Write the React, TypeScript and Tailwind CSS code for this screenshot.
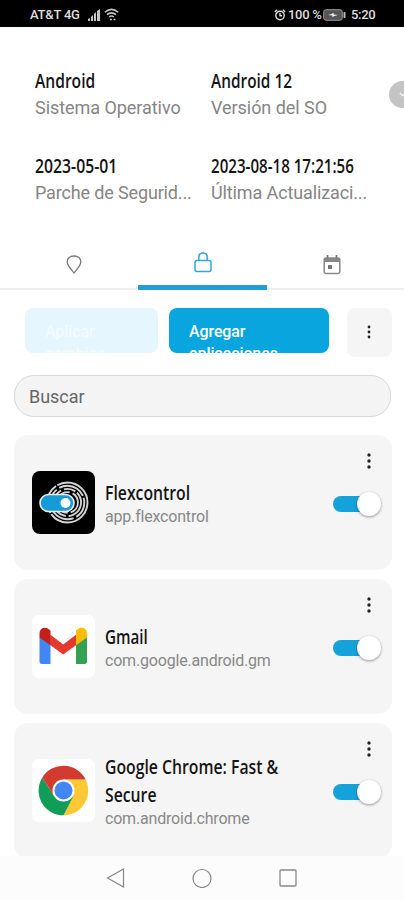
import type { ReactNode } from "react";
import clsx from "clsx";

type AppItem = {
  name: string;
  id: string;
  icon: ReactNode;
  scale: string;
};

function Condensed({ children, className }: { children: ReactNode; className?: string }) {
  return (
    <span
      className={clsx(
        "block w-max origin-left whitespace-pre-line font-['Open_Sans','Noto_Sans',sans-serif] text-[19px] font-semibold leading-7 text-[#151515]",
        className
      )}
    >
      {children}
    </span>
  );
}

function Dots({ small = false }: { small?: boolean }) {
  const gap = small ? 5 : 6;
  const r = small ? 1.4 : 1.7;
  return (
    <svg width="6" height="18" viewBox="0 0 6 18" fill="#222">
      <circle cx="3" cy={9 - gap} r={r} />
      <circle cx="3" cy="9" r={r} />
      <circle cx="3" cy={9 + gap} r={r} />
    </svg>
  );
}

function FlexcontrolIcon() {
  return (
    <svg width="63" height="63" viewBox="0 0 63 63">
      <rect width="63" height="63" rx="8" fill="#000" />
      <g fill="none" stroke="#d5d5d5" strokeWidth="1.9">
        <circle cx="35.500" cy="31.500" r="20" strokeDasharray="50 1.500 30 1.500" />
        <circle cx="35.500" cy="31.500" r="16.800" strokeDasharray="17 3 28 2" />
        <circle cx="35.500" cy="31.500" r="13.600" strokeDasharray="20 3 12 2" />
        <circle cx="35.500" cy="31.500" r="10.400" strokeDasharray="13 3 20 2" />
      </g>
      <rect x="8" y="23.500" width="34" height="17" rx="8.500" fill="#159bd7" stroke="#eee" strokeWidth="1.600" />
      <circle cx="33.500" cy="32" r="5" fill="#fff" />
    </svg>
  );
}

function GmailIcon() {
  return (
    <svg width="63" height="63" viewBox="0 0 63 63">
      <rect width="63" height="63" rx="7" fill="#fff" />
      <path d="M7.500 22 18.500 28V49H10a2.500 2.500 0 0 1-2.500-2.500Z" fill="#4285f4" />
      <path d="M44 28 55 22v24.500a2.500 2.500 0 0 1-2.500 2.500H44Z" fill="#34a052" />
      <path d="M18.200 19.500 31.200 29.500 44.300 19.500V30L31.200 39.500 18.200 30Z" fill="#e5392f" />
      <path d="M7.500 22.500v-4c0-5.500 5.500-7 9-4.500l2 1.800v14.400Z" fill="#c51f1c" />
      <path d="M55 22.500v-4c0-5.500-5.500-7-9-4.500l-2 1.800v14.400Z" fill="#fbbc04" />
    </svg>
  );
}

function ChromeIcon() {
  return (
    <svg width="63" height="63" viewBox="0 0 63 63">
      <rect width="63" height="63" rx="7" fill="#fff" />
      <path d="M31.500 20.500H53.600A24.800 24.800 0 0 1 31.500 56.300L41 37Z" fill="#fcc934" />
      <path d="M10.300 18.500A24.800 24.800 0 0 0 31.500 56.300L41.500 37 31.500 42 22 37Z" fill="#109d58" />
      <path d="M10.300 18.500 22 37l3-13 6.500-3.500H53.600A24.800 24.800 0 0 0 10.300 18.500Z" fill="#d33b30" />
      <circle cx="31.500" cy="31.500" r="11" fill="#fff" />
      <circle cx="31.500" cy="31.500" r="9" fill="#4285f4" />
    </svg>
  );
}

const details = [
  { title: "Android", label: "Sistema Operativo", scale: "scale-x-[0.82]", tracking: "tracking-[-0.05px]" },
  { title: "Android 12", label: "Versión del SO", scale: "scale-x-[0.81]", tracking: "tracking-[-0.05px]" },
  { title: "2023-05-01", label: "Parche de Segurid...", scale: "scale-x-[0.83]", tracking: "tracking-[-0.15px]" },
  { title: "2023-08-18 17:21:56", label: "Última Actualizaci...", scale: "scale-x-[0.795]", tracking: "tracking-[-0.12px]" },
];

const apps: AppItem[] = [
  { name: "Flexcontrol", id: "app.flexcontrol", icon: <FlexcontrolIcon />, scale: "scale-x-[0.83]" },
  { name: "Gmail", id: "com.google.android.gm", icon: <GmailIcon />, scale: "scale-x-[0.8]" },
  { name: "Google Chrome: Fast &\nSecure", id: "com.android.chrome", icon: <ChromeIcon />, scale: "scale-x-[0.83]" },
];

function StatusBar() {
  return (
    <header className="flex h-[27px] shrink-0 items-center justify-between bg-black pl-[30px] pr-[29px] pt-0.5 text-[13px] font-medium text-[#dedede]">
      <div className="flex items-center">
        <span className="w-[50px] whitespace-nowrap tracking-[-0.2px]">AT&amp;T 4G</span>
        <svg className="ml-2" width="12" height="12" viewBox="0 0 12 12" fill="#c5c5c5">
          <path d="M0 12v-2l2-1v3ZM3 12V8l2-2v6ZM6 12V5l2-2v9ZM9 12V2l3-2v12Z" />
        </svg>
        <svg className="ml-1" width="15" height="13" viewBox="0 0 15 13" fill="none" stroke="#c5c5c5" strokeWidth="1.5">
          <path d="M.8 4.200Q7.500-1.500 14.200 4.200M3 6.700q4.500-3.700 9 0M5.200 9q2.300-1.900 4.600 0" />
          <path d="M6 11.500h2M9.500 11.500h2" />
        </svg>
      </div>
      <div className="flex items-center">
        <svg width="12" height="12" viewBox="0 0 12 12" fill="none" stroke="#dedede" strokeWidth="1.400">
          <circle cx="6" cy="6.500" r="4.200" />
          <path d="M6 4v2.700h2M.8 3 3.200.8M11.200 3 8.800.8" />
        </svg>
        <span className="ml-0.5 w-[33px] whitespace-nowrap tracking-[-0.3px]">100 %</span>
        <svg className="ml-0.5" width="23" height="12" viewBox="0 0 23 12">
          <rect x=".7" y=".7" width="18.600" height="10.600" rx="2.500" fill="#555" stroke="#999" />
          <rect x="20.500" y="3" width="2" height="6" rx=".8" fill="#bbb" />
          <path d="m5 6 4-1 1.500-1.500v2L15 6l-4 1-1.500 1.500v-2Z" fill="#fff" />
        </svg>
        <span className="ml-[5px] w-6 whitespace-nowrap tracking-[-0.3px]">5:20</span>
      </div>
    </header>
  );
}

function Tabs() {
  return (
    <nav className="grid h-[50px] shrink-0 grid-cols-[138px_129px_137px] border-b-2 border-[#eee]">
      <button className="flex justify-center pl-[10px] pt-[15px]">
        <svg width="16" height="19" viewBox="0 0 16 19" fill="none" stroke="#777" strokeWidth="1.300">
          <path d="M8 18C6.500 15.500 1.200 11.300 1.200 6.800 1.200 3.200 4 1 8 1s6.800 2.200 6.800 5.800C14.800 11.300 9.500 15.500 8 18Z" />
        </svg>
      </button>
      <button className="-mb-0.5 flex justify-center border-b-[5px] border-[#219fd5] pt-[12px]">
        <svg width="18" height="21" viewBox="0 0 18 21" fill="none" stroke="#35a6da" strokeWidth="1.500">
          <rect x="1" y="8.500" width="16" height="11" rx="2" />
          <path d="M4.800 8.500V5.200C4.800 2.800 6.500 1 9 1s4.200 1.800 4.200 4.200v3.300" />
        </svg>
      </button>
      <button className="flex justify-center pr-[8px] pt-[15px]">
        <svg width="18" height="20" viewBox="0 0 18 20">
          <path d="M4.500 0v4M13.500 0v4" stroke="#777" strokeWidth="1.800" />
          <rect x="1.200" y="3" width="15.600" height="15.500" rx="2" fill="#fff" stroke="#888" strokeWidth="1.500" />
          <path d="M1 3h16v4H1Z" fill="#888" />
          <rect x="5" y="10" width="4" height="4" fill="#777" />
        </svg>
      </button>
    </nav>
  );
}

function Switch() {
  return (
    <div className="flex h-4 w-12 items-center justify-end rounded-full bg-gradient-to-r from-[#13a2d9] from-85% to-transparent to-85%">
      <span className="h-6 w-6 shrink-0 rounded-full bg-white shadow-[0_1px_3px_rgba(0,0,0,0.4)]" />
    </div>
  );
}

function AppRow({ app }: { app: AppItem }) {
  return (
    <article className="flex h-[135px] shrink-0 items-center rounded-[14px] bg-[#f5f5f5] pl-[18px] pr-[11px]">
      <div className="w-[63px] shrink-0">{app.icon}</div>
      <div className="ml-2.5 min-w-0 flex-1">
        <Condensed className={app.scale}>{app.name}</Condensed>
        <p className="text-base leading-5 tracking-[-0.19px] text-[#888]">{app.id}</p>
      </div>
      <div className="flex h-full w-12 shrink-0 flex-col items-center pt-[17px]">
        <button className="ml-[23px]">
          <Dots />
        </button>
        <div className="mt-[26px]">
          <Switch />
        </div>
      </div>
    </article>
  );
}

export default function App() {
  return (
    <div className="flex h-[900px] w-[404px] flex-col overflow-hidden bg-white font-[Roboto,sans-serif]">
      <StatusBar />

      <section className="relative grid h-[213px] shrink-0 grid-cols-[176px_1fr] content-start gap-y-[32px] pl-[35px] pt-[40px]">
        {details.map((item) => (
          <div key={item.title}>
            <Condensed className={item.scale}>{item.title}</Condensed>
            <p className={clsx("whitespace-nowrap text-lg leading-[25px] text-[#858585]", item.tracking)}>{item.label}</p>
          </div>
        ))}
        <button className="absolute -right-3 top-[54px] flex h-[27px] w-[27px] items-center justify-center rounded-full bg-[#c4c4c4]">
          <svg width="7" height="5" viewBox="0 0 9 6" fill="none" stroke="#f5f5f5" strokeWidth="1.800">
            <path d="m1 1 3.500 3.500L8 1" />
          </svg>
        </button>
      </section>

      <Tabs />

      <main className="flex h-[566px] shrink-0 flex-col overflow-hidden pl-[14px] pr-3 pt-[18px]">
        <div className="flex shrink-0 items-start pl-[11px] text-base font-medium leading-[22px] tracking-[-0.1px]">
          <button className="flex h-[45px] w-[133px] items-start overflow-hidden rounded-lg bg-[#e5f6fe] px-5 pt-[13px] text-left text-[#f3fbff]">
            Aplicar cambios
          </button>
          <button className="ml-[11px] flex h-[45px] w-40 items-start overflow-hidden rounded-lg bg-[#08a5df] px-5 pt-[13px] text-left text-white">
            Agregar aplicaciones
          </button>
          <button className="ml-[18px] flex h-[49px] w-[45px] items-center justify-center rounded-lg bg-[#f5f5f5] pb-0.5 pr-0.5">
            <Dots small />
          </button>
        </div>

        <input
          className="mt-[18px] h-[42px] w-[377px] shrink-0 rounded-[20px] border border-[#d8d8d8] bg-[#f4f4f4] px-3.5 text-lg tracking-[-0.05px] outline-none placeholder:text-[#666]"
          placeholder="Buscar"
        />

        <div className="mt-[18px] flex flex-col gap-[9px]">
          {apps.map((app) => (
            <AppRow key={app.id} app={app} />
          ))}
        </div>
      </main>

      <footer className="flex h-11 shrink-0 items-center justify-center gap-[66px] bg-[#fcfcfc]">
        <svg width="20" height="20" viewBox="0 0 20 20" fill="none" stroke="#888" strokeWidth="1.200">
          <path d="M17.500 1v18L1.500 10Z" />
        </svg>
        <svg width="20" height="20" viewBox="0 0 20 20" fill="none" stroke="#888" strokeWidth="1.200">
          <circle cx="10" cy="10.500" r="9" />
        </svg>
        <svg width="20" height="20" viewBox="0 0 20 20" fill="none" stroke="#888" strokeWidth="1.300">
          <rect x="2" y="2" width="16" height="16" rx="1" />
        </svg>
      </footer>
    </div>
  );
}
